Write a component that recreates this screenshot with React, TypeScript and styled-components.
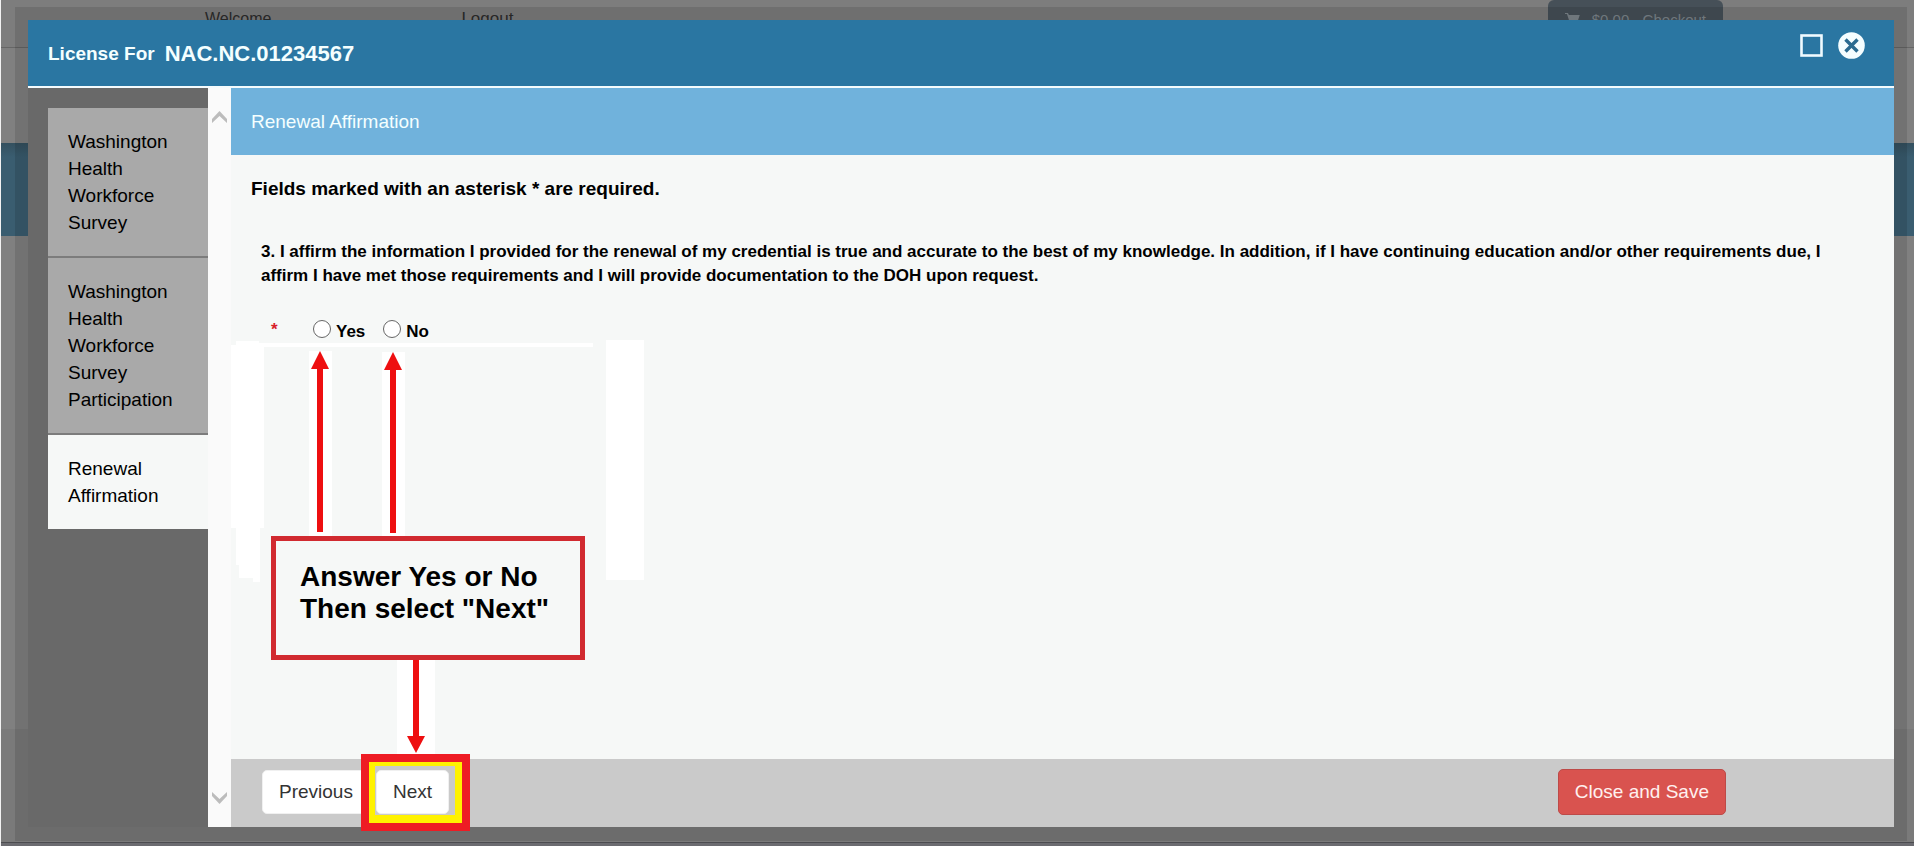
import React from "react";
import styled, { createGlobalStyle } from "styled-components";

const GlobalStyle = createGlobalStyle`
  *, *::before, *::after { box-sizing: border-box; }
  html, body, #root { height: 100%; }
  body { margin: 0; background: #808080; overflow: hidden; }
  body, button, input { font-family: "Liberation Sans", Arial, sans-serif; font-size: 19px; line-height: 27px; color: #000; }
`;

/* ---------- dimmed page behind the dialog ---------- */

const Backdrop = styled.div`
  display: flex;
  flex-direction: column;
  min-height: 100vh;
  background: #808080;
  border-left: 1px solid #f2f2f2;
`;

const TopBar = styled.div`
  display: flex;
  height: 48px;
  border-bottom: 1px solid #666;
  background: #7d7d7d;
  color: #2c2c2c;
  font-size: 16px;
`;

const Account = styled.div`
  display: flex;
  flex: 1;
  gap: 190px;
  padding: 7px 0 0 204px;
  line-height: 24px;
`;

const AccountLink = styled.a`
  color: inherit;
  font-size: 17px;
  text-decoration: none;
`;

const Checkout = styled.button`
  display: flex;
  align-items: center;
  gap: 12px;
  width: 175px;
  height: 38px;
  margin-right: 191px;
  padding: 0 17px;
  border: 0;
  border-radius: 0 0 6px 6px;
  border-radius: 6px;
  background: #465058;
  color: #7d868c;
  font-size: 15px;
  white-space: nowrap;
`;

const Masthead = styled.div`
  height: 95px;
`;

const NavBand = styled.div`
  height: 93px;
  background: linear-gradient(#34505f, #3a5d70 14px);
`;

const PageBody = styled.div`
  flex: 1;
`;

const PageFooter = styled.div`
  height: 113px;
  background: #7a7a7a;
`;

const PageEnd = styled.div`
  height: 4px;
  border-top: 1px solid #4c4c50;
  background: #6b6b70;
`;

/* ---------- dialog ---------- */

const Frame = styled.div`
  position: fixed;
  inset: 7px 7px 5px 15px;
  display: flex;
  padding: 13px 13px 14px;
  background: rgba(0, 0, 0, 0.11);
`;

const Dialog = styled.section`
  flex: 1;
  display: flex;
  flex-direction: column;
  min-width: 0;
`;

const DialogHeader = styled.header`
  display: flex;
  justify-content: space-between;
  height: 68px;
  padding: 0 29px 0 20px;
  border-bottom: 2px solid #f4fbfd;
  background: #2a76a2;
  color: #f4ffff;
`;

const DialogTitle = styled.h1`
  display: flex;
  align-items: center;
  gap: 10px;
  margin: 0;
  font-size: 19px;
  line-height: 27px;
`;

const LicenseNumber = styled.span`
  font-size: 22px;
`;

const WindowControls = styled.div`
  display: flex;
  gap: 13px;
  padding-top: 12px;
`;

const IconButton = styled.button`
  display: flex;
  align-items: center;
  justify-content: center;
  width: 27px;
  height: 27px;
  padding: 0;
  border: 0;
  background: none;
`;

const DialogBody = styled.div`
  flex: 1;
  display: flex;
  min-height: 0;
`;

const Sidebar = styled.nav`
  flex: 0 0 180px;
  padding: 20px 0 0 20px;
  background: #696969;
`;

const StepLink = styled.a<{ $current?: boolean }>`
  display: block;
  padding: 20px;
  border-bottom: ${(p) => (p.$current ? "0" : "2px solid #7c7c7c")};
  background: ${(p) => (p.$current ? "#f6f8f7" : "#a9a9a9")};
  color: #000;
  text-decoration: none;
`;

const ScrollTrack = styled.div`
  flex: 0 0 23px;
  display: flex;
  flex-direction: column;
  justify-content: space-between;
  align-items: center;
  padding: 22px 0;
  background: #fafafa;
`;

const Panel = styled.main`
  position: relative;
  flex: 1;
  display: flex;
  flex-direction: column;
  min-width: 0;
  background: #f6f8f7;
`;

const PanelTitle = styled.h2`
  margin: 0;
  padding: 20px;
  background: #70b2dc;
  color: #f4ffff;
  font-size: 19px;
  font-weight: 400;
`;

const PanelContent = styled.div`
  flex: 1;
  padding: 20px 20px 0;
`;

const Notice = styled.p`
  margin: 0 0 38px;
  font-weight: 700;
`;

const Question = styled.fieldset`
  margin: 0;
  padding: 0 10px;
  border: 0;
  font-size: 17px;
  font-weight: 700;
`;

const QuestionText = styled.legend`
  padding: 0;
  margin-bottom: 28px;
  line-height: 24px;
`;

const Answers = styled.div`
  display: flex;
  align-items: flex-start;
  padding-left: 10px;
`;

const Required = styled.span`
  width: 42px;
  color: #d8202a;
`;

const Choice = styled.label`
  display: flex;
  align-items: flex-start;
  gap: 5px;
  margin-right: 18px;
  line-height: 32px;
`;

const Radio = styled.input`
  appearance: none;
  width: 18px;
  height: 18px;
  margin: 4px 0 0;
  border: 1px solid #666;
  border-radius: 50%;
  background: #fff;
`;

const Actions = styled.footer`
  display: flex;
  align-items: center;
  gap: 6px;
  height: 68px;
  padding: 0 168px 2px 31px;
  background: #cacaca;
`;

const Button = styled.button<{ $danger?: boolean }>`
  height: ${(p) => (p.$danger ? 46 : 44)}px;
  margin-left: ${(p) => (p.$danger ? "auto" : "0")};
  padding: 0 16px 2px;
  border: 1px solid ${(p) => (p.$danger ? "#bd4a48" : "#f0f0f0")};
  border-radius: 5px;
  background: ${(p) => (p.$danger ? "#d9534f" : "#fff")};
  color: ${(p) => (p.$danger ? "#fff0ee" : "#333")};
`;

/* ---------- instructional mark-up lying over the dialog ---------- */

const Marks = styled.svg`
  position: absolute;
  left: 0;
  bottom: 0;
  pointer-events: none;
`;

const Callout = styled.div`
  position: absolute;
  left: 40px;
  bottom: 167px;
  width: 314px;
  height: 124px;
  padding: 20px 24px;
  border: 5px solid #d12a30;
  background: #f6f8f7;
  font-size: 28px;
  font-weight: 700;
  line-height: 32px;
`;

const RedFrame = styled.div`
  position: absolute;
  left: 130px;
  bottom: -4px;
  width: 109px;
  height: 77px;
  border: 8px solid #ee1c24;
  pointer-events: none;
`;

const YellowFrame = styled.div`
  height: 100%;
  border: solid #fff200;
  border-width: 4px 7px 8px 6px;
`;

const steps = [
  "Washington Health Workforce Survey",
  "Washington Health Workforce Survey Participation",
  "Renewal Affirmation",
];

function Chevron({ down }: { down?: boolean }) {
  return (
    <svg width="17" height="14" viewBox="0 0 17 14">
      <path
        d={down ? "M1 1 8.500 8 16 1V5L8.500 13 1 5Z" : "M1 13 8.500 6 16 13V9L8.500 1 1 9Z"}
        fill="#bcbcbc"
      />
    </svg>
  );
}

export default function App() {
  return (
    <>
      <GlobalStyle />
      <Backdrop>
        <TopBar>
          <Account>
            <span>Welcome</span>
            <AccountLink href="#logout">Logout</AccountLink>
          </Account>
          <Checkout type="button">
            <svg width="15" height="14" viewBox="0 0 15 14" fill="#7d868c">
              <path d="M0 1H3L4 3H15L13 9H5L5 10H13V11H4L4 8 2 2H0Z" />
              <circle cx="5" cy="12.500" r="1.500" />
              <circle cx="12" cy="12.500" r="1.500" />
            </svg>
            $0.00 - Checkout
          </Checkout>
        </TopBar>
        <Masthead />
        <NavBand />
        <PageBody />
        <PageFooter />
        <PageEnd />
      </Backdrop>

      <Frame>
        <Dialog role="dialog" aria-labelledby="dialog-title">
          <DialogHeader>
            <DialogTitle id="dialog-title">
              License For <LicenseNumber>NAC.NC.01234567</LicenseNumber>
            </DialogTitle>
            <WindowControls>
              <IconButton type="button" aria-label="Maximize">
                <svg width="23" height="23" viewBox="0 0 23 23">
                  <rect x="1.500" y="1.500" width="20" height="20" fill="none" stroke="#effaff" strokeWidth="2.600" />
                </svg>
              </IconButton>
              <IconButton type="button" aria-label="Close">
                <svg width="27" height="27" viewBox="0 0 27 27">
                  <circle cx="13.500" cy="13.500" r="13.300" fill="#f4fdff" />
                  <path d="M7.500 7.500 19.500 19.500M19.500 7.500 7.500 19.500" stroke="#2a6a90" strokeWidth="3.400" />
                </svg>
              </IconButton>
            </WindowControls>
          </DialogHeader>

          <DialogBody>
            <Sidebar>
              {steps.map((step, i) => (
                <StepLink key={step} href="#step" $current={i === 2}>
                  {step}
                </StepLink>
              ))}
            </Sidebar>
            <ScrollTrack>
              <Chevron />
              <Chevron down />
            </ScrollTrack>

            <Panel>
              <PanelTitle>Renewal Affirmation</PanelTitle>
              <PanelContent>
                <Notice>Fields marked with an asterisk * are required.</Notice>
                <Question>
                  <QuestionText>
                    3. I affirm the information I provided for the renewal of my credential is true and accurate to the
                    best of my knowledge. In addition, if I have continuing education and/or other requirements due, I
                    affirm I have met those requirements and I will provide documentation to the DOH upon request.
                  </QuestionText>
                  <Answers>
                    <Required>*</Required>
                    <Choice>
                      <Radio type="radio" name="affirm" value="yes" />
                      Yes
                    </Choice>
                    <Choice>
                      <Radio type="radio" name="affirm" value="no" />
                      No
                    </Choice>
                  </Answers>
                </Question>
              </PanelContent>
              <Actions>
                <Button type="button">Previous</Button>
                <Button type="button">Next</Button>
                <Button type="button" $danger>
                  Close and Save
                </Button>
              </Actions>

              <Marks width="420" height="487" viewBox="231 340 420 487">
                <g fill="#fff">
                  <path d="M236 341H259V345H264V528H260V582H253V578H239V565H236V528H231V345H236Z" />
                  <path d="M259 343H593V347H259Z" />
                  <path d="M606 340H644V580H606Z" />
                  <path d="M309 351H332V536H309ZM382 352H405V536H382ZM397 660H435V754H397Z" />
                </g>
                <g fill="#ee0f10">
                  <path d="M320 351 329 369H323V532H317V369H311Z" />
                  <path d="M393 352 402 370H396V533H390V370H384Z" />
                  <path d="M413 660H419V736H425L416 753 407 736H413Z" />
                </g>
              </Marks>
              <Callout>
                Answer Yes or No
                <br />
                Then select "Next"
              </Callout>
              <RedFrame>
                <YellowFrame />
              </RedFrame>
            </Panel>
          </DialogBody>
        </Dialog>
      </Frame>
    </>
  );
}
